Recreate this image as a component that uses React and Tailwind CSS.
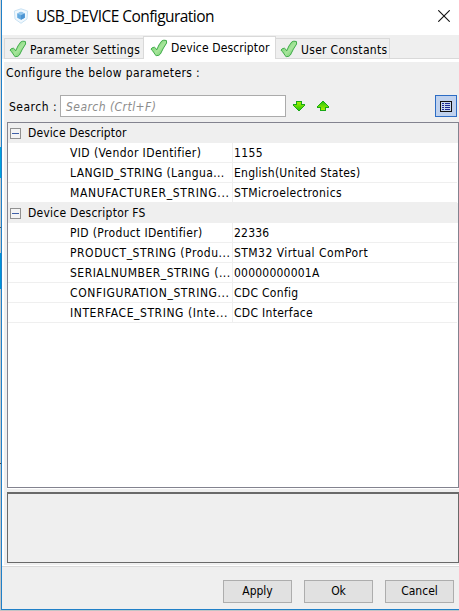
import React from "react";

const GROUPS = [
  {
    title: "Device Descriptor",
    tracking: "tracking-[0.12px]",
    rows: [
      ["VID (Vendor IDentifier)", "tracking-[0.4px]", "1155", "tracking-[0.4px]"],
      ["LANGID_STRING (Langua...", "tracking-[0.39px]", "English(United States)", "tracking-[0.27px]"],
      ["MANUFACTURER_STRING...", "tracking-[0.66px]", "STMicroelectronics", "tracking-[0.38px]"],
    ],
  },
  {
    title: "Device Descriptor FS",
    tracking: "tracking-[0.25px]",
    rows: [
      ["PID (Product IDentifier)", "tracking-[0.34px]", "22336", "tracking-[0.2px]"],
      ["PRODUCT_STRING (Produ...", "tracking-[0.54px]", "STM32 Virtual ComPort", "tracking-[0.45px]"],
      ["SERIALNUMBER_STRING (...", "tracking-[0.5px]", "00000000001A", "tracking-[0.22px]"],
      ["CONFIGURATION_STRING...", "tracking-[0.6px]", "CDC Config", "tracking-[0.3px]"],
      ["INTERFACE_STRING (Inte...", "tracking-[0.58px]", "CDC Interface", "tracking-[0.3px]"],
    ],
  },
];

function Check() {
  return (
    <svg width="18" height="18" viewBox="0 0 18 18" className="shrink-0">
      <defs>
        <linearGradient id="leaf" x1="0" y1="0" x2="1" y2="1">
          <stop offset="0" stopColor="#5cc85a" />
          <stop offset="0.55" stopColor="#a8e59c" />
          <stop offset="1" stopColor="#5fc75c" />
        </linearGradient>
      </defs>
      <path d="M1 10.2 Q1.8 8.2 4.4 8.2 Q5.8 8.9 6.7 10.9 Q8.6 5.6 11.8 1.9 Q13.6 .7 16.4 1.5 L16.6 4 Q13.4 8.6 10.4 15 Q9.2 16.9 6.2 16.6 Q4.8 15.8 4.2 14 Q2.8 11.6 1 10.2Z" fill="url(#leaf)" stroke="#3fac49" strokeWidth="1" strokeLinejoin="round" />
    </svg>
  );
}

function Arrow({ up }) {
  return (
    <svg width="12" height="10" viewBox="0 0 12 10" shapeRendering="crispEdges">
      <defs>
        <linearGradient id="lime" x1="0" y1="0" x2="0" y2="1">
          <stop offset="0" stopColor="#a8f000" />
          <stop offset="1" stopColor="#2cc808" />
        </linearGradient>
      </defs>
      <g transform={up ? "matrix(1 0 0 -1 0 10)" : undefined}>
        <path d="M3 0H9V3H12V5H11V6H10V7H9V8H8V9H7V10H5V9H4V8H3V7H2V6H1V5H0V3H3Z" fill="#18a818" />
        <path d="M4 1H8V4H11V5H10V6H9V7H8V8H7V9H5V8H4V7H3V6H2V5H1V4H4Z" fill="url(#lime)" />
      </g>
    </svg>
  );
}

function Cube() {
  return (
    <svg width="16" height="16" viewBox="0 0 16 16">
      <path d="M8 .8 14.6 3 14 11 8 15.3 2 11 1.4 3Z" fill="#f1f8fd" stroke="#c8e2f4" strokeWidth="1" />
      <path d="M8 3.8 11.8 5.4V9.8L8 11.8 4.2 9.8V5.4Z" fill="#65aae0" />
      <path d="M8 3.8 11.8 5.4 8 7.2 4.2 5.4Z" fill="#93c6ec" />
      <path d="M8 7.2 11.8 5.4V9.8L8 11.8Z" fill="#4c94d2" />
    </svg>
  );
}

function Button({ children }) {
  return (
    <button className="h-[23px] w-[69px] border border-[#adadad] bg-[#e1e1e1] text-center leading-[21px]">
      {children}
    </button>
  );
}

export default function App() {
  return (
    <div className="flex h-[611px] w-[459px] overflow-hidden bg-[#c4c4c4] font-['DejaVu_Sans_Condensed','DejaVu_Sans',sans-serif] text-[12px] text-black">
      <div className="flex w-px shrink-0 flex-col">
        <div className="h-[147px] bg-[#d6d6d6]" />
        <div className="h-[31px] bg-[#00a2dc]" />
        <div className="h-[49px] bg-[#c8c8c8]" />
        <div className="h-px bg-[#555]" />
        <div className="h-[25px] bg-[#c8c8c8]" />
        <div className="h-[36px] bg-[#0093d8]" />
        <div className="h-[174px] bg-[#c8c8c8]" />
        <div className="h-px bg-[#444]" />
      </div>
      <div className="flex h-[610px] w-[458px] shrink-0 flex-col border-b border-l border-[#2080c8] bg-[#efefef]">
        <header className="flex h-[35px] shrink-0 items-start bg-white pl-[11px] pt-2">
          <Cube />
          <h1 className="ml-[7px] mt-[-3px] whitespace-nowrap font-['Open_Sans','Noto_Sans',sans-serif] text-[15.5px] leading-[22px] tracking-[-0.56px]">USB_DEVICE Configuration</h1>
          <svg width="12" height="12" viewBox="0 0 12 12" className="ml-auto mr-[9px] mt-[2px]">
            <path d="M.3.3 11.7 11.7M11.7.3.3 11.7" stroke="#111" strokeWidth="1.1" />
          </svg>
        </header>

        <nav className="flex h-6 shrink-0 items-end whitespace-nowrap pl-[2px]">
          <div className="flex h-[21px] w-[139px] items-center border border-r-0 border-[#d9d9d9] pl-[4px]">
            <Check />
            <span className="ml-[3px] mt-[2px] tracking-[0.35px]">Parameter Settings</span>
          </div>
          <div className="flex h-[23px] w-[133px] items-center border border-b-0 border-[#d9d9d9] bg-white pl-[6px]">
            <Check />
            <span className="ml-[3px] tracking-[0.12px]">Device Descriptor</span>
          </div>
          <div className="flex h-[21px] w-[114px] items-center border border-l-0 border-[#d9d9d9] pl-[4px]">
            <Check />
            <span className="ml-[3px] mt-[2px] tracking-[0.3px]">User Constants</span>
          </div>
          <div className="h-px flex-1 bg-[#d9d9d9]" />
        </nav>

        <main className="h-[508px] shrink-0 border-b border-[#d9d9d9] bg-white pb-px pl-[2px] pt-[3px]">
          <div className="flex h-[503px] flex-col bg-[#efefef] pl-[3px]">
            <div className="h-[33px] shrink-0 whitespace-nowrap pt-[3px] leading-[16px] tracking-[0.38px]">
              <span className="-ml-px">Configure the below parameters :</span>
            </div>
            <div className="flex h-[22px] shrink-0 items-center">
              <span className="w-[53px] whitespace-nowrap pl-[2px] pt-px tracking-[0.5px]">Search :</span>
              <div className="flex h-[22px] w-[226px] items-center border border-[#ababab] bg-white pl-[5px] pt-px italic tracking-[0.45px] text-[#8c8c8c]">Search (Crtl+F)</div>
              <div className="ml-[7px] flex gap-3">
                <Arrow />
                <Arrow up />
              </div>
              <div className="ml-auto mr-[2px] flex size-[22px] items-center justify-center border border-[#2c6cc4] bg-[#c0d2ee]">
                <svg width="12" height="11" viewBox="0 0 12 11" shapeRendering="crispEdges">
                  <rect x=".5" y=".5" width="11" height="10" fill="#c8d8f0" stroke="#111" />
                  <path d="M2 2.5H4M2 4.5H4M2 6.5H4M2 8.5H4M5 2.5H10M5 4.5H10M5 6.5H10M5 8.5H10" stroke="#1c2a96" />
                </svg>
              </div>
            </div>

            <section className="mt-[5px] h-[366px] w-[452px] shrink-0 border border-[#83838f] bg-white">
              {GROUPS.map((group) => (
                <div key={group.title}>
                  <div className="flex h-5 items-center bg-[#efefef]">
                    <svg width="11" height="11" viewBox="0 0 11 11" shapeRendering="crispEdges" className="ml-[2px]">
                      <rect x=".5" y=".5" width="10" height="10" fill="#f4f4f4" stroke="#919191" />
                      <path d="M2 5.5H9" stroke="#4060a8" />
                    </svg>
                    <span className={`ml-[7px] ${group.tracking}`}>{group.title}</span>
                  </div>
                  {group.rows.map(([name, nameTracking, value, valueTracking]) => (
                    <div key={name} className="mr-px flex h-5 whitespace-nowrap border-b border-[#efefef] leading-[21px]">
                      <div className={`h-[19px] w-[225px] shrink-0 border-r border-[#efefef] pl-[62px] ${nameTracking}`}>{name}</div>
                      <div className={`h-[19px] pl-px ${valueTracking}`}>{value}</div>
                    </div>
                  ))}
                </div>
              ))}
            </section>
            <div className="mr-px h-px w-[452px] shrink-0 bg-white" />
            <section className="mt-[3px] h-[71px] w-[452px] shrink-0 border border-t-2 border-[#696969]" />
          </div>
        </main>

        <footer className="flex gap-3 pl-[221px] pt-[13px]">
          <Button>Apply</Button>
          <Button>Ok</Button>
          <Button>Cancel</Button>
        </footer>
      </div>
    </div>
  );
}
